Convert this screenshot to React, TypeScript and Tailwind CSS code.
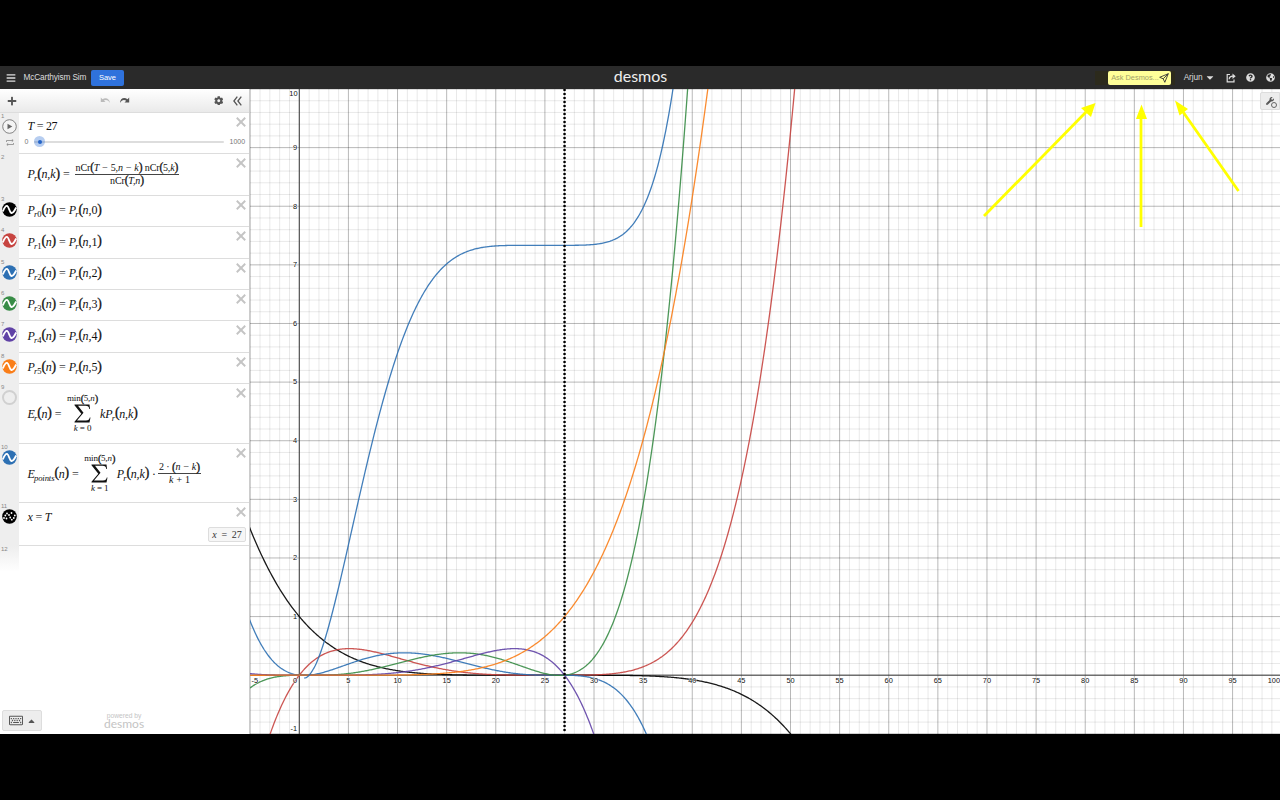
import React from 'react';
import { FaBars, FaCaretDown, FaCaretUp, FaCog, FaGlobeAmericas, FaPlus, FaQuestionCircle, FaRegKeyboard, FaWrench } from 'react-icons/fa';

const COLORS = {
  black: '#000000',
  red: '#c74440',
  blue: '#2d70b3',
  green: '#388c46',
  purple: '#6042a6',
  orange: '#fa7e19',
};

// Plot geometry
const W = 1030;
const H = 645;
const X0 = 49.3;
const Y0 = 586.2;
const SX = 9.824;
const SY = 58.62;

const T = 27;
const BINOM = [1, 5, 10, 10, 5, 1];

const falling = (n: number, k: number) => {
  let r = 1;
  for (let i = 0; i < k; i++) r *= n - i;
  return r;
};

// nCr(T-5,n-k) nCr(5,k) / nCr(T,n), simplified to a polynomial in n
const prob = (n: number, k: number) =>
  (BINOM[k] * falling(n, k) * falling(T - n, 5 - k)) / falling(T, 5);

const expectedPoints = (n: number) => {
  let sum = 0;
  for (let k = 1; k <= Math.min(5, Math.round(n)); k++) {
    sum += (prob(n, k) * 2 * (n - k)) / (k + 1);
  }
  return sum;
};

const plot = (f: (n: number) => number, from = -5.1, to = 60) => {
  let d = '';
  let pen = false;
  for (let n = from; n <= to; n += 0.1) {
    const y = f(n);
    if (y > 12 || y < -3) {
      pen = false;
      continue;
    }
    d += `${pen ? 'L' : 'M'}${(X0 + n * SX).toFixed(2)} ${(Y0 - y * SY).toFixed(2)}`;
    pen = true;
  }
  return d;
};

const range = (a: number, b: number) => Array.from({ length: b - a + 1 }, (_, i) => a + i);

function Graph() {
  const curves = [
    { color: COLORS.black, d: plot((n) => prob(n, 0)) },
    { color: COLORS.red, d: plot((n) => prob(n, 1)) },
    { color: COLORS.blue, d: plot((n) => prob(n, 2)) },
    { color: COLORS.green, d: plot((n) => prob(n, 3)) },
    { color: COLORS.purple, d: plot((n) => prob(n, 4)) },
    { color: COLORS.orange, d: plot((n) => prob(n, 5)) },
    { color: COLORS.blue, d: plot(expectedPoints, 0.5) },
  ];

  return (
    <svg width={W} height={H} viewBox={`0 0 ${W} ${H}`} className="block">
      <rect width={W} height={H} fill="#fff" />
      {range(-5, 100).map((n) => (
        <line key={n} x1={X0 + n * SX} x2={X0 + n * SX} y1={0} y2={H} stroke="#000" strokeOpacity={n % 5 === 0 ? 0.28 : 0.09} />
      ))}
      {range(-5, 50).map((n) => (
        <line key={n} x1={0} x2={W} y1={Y0 - (n * SY) / 5} y2={Y0 - (n * SY) / 5} stroke="#000" strokeOpacity={n % 5 === 0 ? 0.28 : 0.09} />
      ))}
      <line x1={X0} x2={X0} y1={0} y2={H} stroke="#444" />
      <line x1={0} x2={W} y1={Y0} y2={Y0} stroke="#444" />

      {curves.map((c, i) => (
        <path key={i} d={c.d} fill="none" stroke={c.color} strokeWidth={1.3} strokeOpacity={0.9} strokeLinejoin="round" />
      ))}
      <line x1={X0 + T * SX} x2={X0 + T * SX} y1={1} y2={H} stroke="#000" strokeWidth={2.7} strokeLinecap="round" strokeDasharray="0 4" />

      <g fontFamily='"Liberation Sans", Arial, sans-serif' fontSize={7.4} fill="#111" stroke="#fff" strokeWidth={1} strokeOpacity={0.8} paintOrder="stroke">
        {range(1, 19).map((i) => (
          <text key={i} x={X0 + i * 5 * SX} y={594.4} textAnchor="middle">{i * 5}</text>
        ))}
        <text x={1.6} y={594.4}>-5</text>
        <text x={47} y={594.4} textAnchor="end">0</text>
        <text x={1030} y={594.4} textAnchor="end">100</text>
        {range(1, 9).map((i) => (
          <text key={i} x={47} y={Y0 - i * SY + 2.3} textAnchor="end">{i}</text>
        ))}
        <text x={47.5} y={7.3} textAnchor="end">10</text>
        <text x={47} y={642} textAnchor="end">-1</text>
      </g>

      {/* Arrows pointing at the ask box */}
      <g stroke="#ff0" strokeWidth={2.8} fill="#ff0">
        <path d="M734 127L838 21" />
        <path d="M891 138V24" />
        <path d="M988.5 102L931 20" />
        <g stroke="none">
          <path d="M845.5 14L841 28L831 19Z" />
          <path d="M891.5 15.5L897 30H886Z" />
          <path d="M925 11.5L938 20L929.500 26.500Z" />
        </g>
      </g>
    </svg>
  );
}

function Paren({ children }: { children: React.ReactNode }) {
  return (
    <span className="inline-flex items-center whitespace-nowrap">
      <span className="relative -top-[0.500px] mr-[-0.300px] text-[1.15em] not-italic [-webkit-text-stroke:0.300px_#111]">(</span>
      {children}
      <span className="relative -top-[0.500px] text-[1.15em] not-italic [-webkit-text-stroke:0.300px_#111]">)</span>
    </span>
  );
}

function Sub({ children }: { children: React.ReactNode }) {
  return <span className="relative top-[0.480em] -ml-[0.800px] text-[0.720em]">{children}</span>;
}

function Num({ children }: { children: React.ReactNode }) {
  return <span className="not-italic">{children}</span>;
}

function Eq() {
  return <span className="ml-[3px] mr-[3px] not-italic text-[#444]">=</span>;
}

function Frac({ top, bottom }: { top: React.ReactNode; bottom: React.ReactNode }) {
  return (
    <span className="ml-[2px] inline-flex flex-col items-center whitespace-nowrap text-[10px] leading-[12px]">
      <span className="flex items-center border-b border-[#444] px-px">{top}</span>
      <span className="flex items-center">{bottom}</span>
    </span>
  );
}

function Sum({ from }: { from: string }) {
  return (
    <span className="ml-[2px] inline-flex w-[32px] flex-col items-center text-[9px] leading-[9px]">
      <span className="flex items-center"><Num>min</Num><Paren><Num>5</Num>,n</Paren></span>
      <svg width="17" height="19" viewBox="0 0 17 19" className="my-px">
        <path d="M0.500 0.500H15.500L16 5H15.300C15 2.500 14 1.800 11.500 1.800H4L9.500 8.800L3 16.500H12C14.500 16.500 15.300 15.500 15.800 13.500H16.500L15.500 18.500H0.500V17.800L7.300 9.800L0.500 1.200Z" fill="#111" />
      </svg>
      <span>k<Num> = {from}</Num></span>
    </span>
  );
}

function CurveIcon({ color }: { color: string }) {
  return (
    <svg width="15" height="15" viewBox="0 0 15 15">
      <circle cx="7.500" cy="7.500" r="7.300" fill={color} />
      <path d="M0.800 9.500C2.500 5.500 4 3.500 5.200 4C7 4.800 7.500 10.500 9.400 11C10.800 11.300 12.500 9 14.200 5.500" fill="none" stroke="#fff" strokeWidth="1.900" />
    </svg>
  );
}

function DottedIcon() {
  const dots = [[2, 9], [3.3, 6.5], [5, 4.5], [7, 6], [8.2, 8.5], [9.8, 10.7], [11.8, 9], [12.8, 6.5], [9.5, 4], [4.5, 9.5]];
  return (
    <svg width="15" height="15" viewBox="0 0 15 15">
      <circle cx="7.500" cy="7.500" r="7.300" />
      {dots.map(([x, y], i) => <circle key={i} cx={x} cy={y} r="0.900" fill="#fff" />)}
    </svg>
  );
}

function PlayIcon() {
  return (
    <svg width="15" height="15" viewBox="0 0 15 15">
      <circle cx="7.500" cy="7.500" r="6.800" fill="#f4f4f4" stroke="#777" strokeWidth="0.900" />
      <path d="M5.500 4.800L10.300 7.500L5.500 10.200Z" fill="#666" />
    </svg>
  );
}

interface RowProps {
  index: number;
  height: string;
  icon?: React.ReactNode;
  children?: React.ReactNode;
}

function Row({ index, height, icon, children }: RowProps) {
  return (
    <div className={`flex ${height}`}>
      <div className="relative flex w-[19px] shrink-0 flex-col items-center bg-[#eee] pt-[6px]">
        <span className="absolute left-px top-0 font-['Liberation_Sans',sans-serif] text-[6px] not-italic leading-[6px] text-[#888]">{index}</span>
        {icon}
      </div>
      <div className="relative flex flex-1 items-center border-b border-[#ddd] pb-px pl-[8.500px]">
        {children}
        <svg width="10" height="10" viewBox="0 0 9 9" className="absolute right-[3px] top-[3.500px]">
          <path d="M0.700 0.700L8.300 8.300M8.300 0.700L0.700 8.300" stroke="#c4c4c4" strokeWidth="1.700" />
        </svg>
      </div>
    </div>
  );
}

const PROBS = [
  { color: COLORS.black, height: 'h-[31px]' },
  { color: COLORS.red, height: 'h-[32px]' },
  { color: COLORS.blue, height: 'h-[31px]' },
  { color: COLORS.green, height: 'h-[31px]' },
  { color: COLORS.purple, height: 'h-[32px]' },
  { color: COLORS.orange, height: 'h-[31px]' },
];

function Expressions() {
  return (
    <div className="font-['Liberation_Serif',serif] text-[12px] italic leading-[14px] tracking-[-0.100px] text-[#111]">
      <Row
        index={1}
        height="h-[41px]"
        icon={
          <>
            <PlayIcon />
            <svg width="8" height="7" viewBox="0 0 8 7" className="mt-[5px]" fill="none" stroke="#888" strokeWidth="0.800">
              <path d="M0.500 3V1.500H7M5.800 0.300L7.200 1.500L5.800 2.700M7.500 4V5.500H1M2.200 4.300L0.800 5.500L2.200 6.700" />
            </svg>
          </>
        }
      >
        <div className="flex flex-1 flex-col pt-[2px]">
          <span className="tracking-[-0.450px]">T<Eq /><Num>27</Num></span>
          <div className="-ml-[3px] mt-[2px] flex items-center font-['Liberation_Sans',sans-serif] text-[7px] not-italic tracking-normal text-[#777]">
            <span className="w-[9.500px]">0</span>
            <div className="relative h-[2px] w-[189.500px] rounded bg-[#ddd]">
              <span className="absolute left-0 top-[-4.500px] flex h-[11px] w-[11px] items-center justify-center rounded-full bg-[#2d70d3]/35">
                <span className="h-[4px] w-[4px] rounded-full bg-[#2464c8]" />
              </span>
            </div>
            <span className="ml-[6px]">1000</span>
          </div>
        </div>
      </Row>
      <Row index={2} height="h-[42px]">
        <span className="inline-flex items-center">
          P<Sub>r</Sub><Paren>n,k</Paren><Eq />
          <Frac
            top={<><Num>nCr</Num><Paren>T&nbsp;−&nbsp;<Num>5</Num>,n&nbsp;−&nbsp;k</Paren>&nbsp;<Num>nCr</Num><Paren><Num>5</Num>,k</Paren></>}
            bottom={<><Num>nCr</Num><Paren>T,n</Paren></>}
          />
        </span>
      </Row>
      {PROBS.map((p, i) => (
        <Row key={i} index={i + 3} height={p.height} icon={<CurveIcon color={p.color} />}>
          <span className="inline-flex items-center pb-px">
            P<Sub>r<Num>{i}</Num></Sub><Paren>n</Paren><Eq />P<Sub>r</Sub><Paren>n,<Num>{i}</Num></Paren>
          </span>
        </Row>
      ))}
      <Row index={9} height="h-[60px]" icon={<span className="h-[15px] w-[15px] rounded-full border-2 border-[#d0d0d0]" />}>
        <span className="inline-flex items-center pt-px">
          E<Sub>r</Sub><Paren>n</Paren><Eq /><Sum from="0" /><span className="ml-[1.500px]">kP</span><Sub>r</Sub><Paren>n,k</Paren>
        </span>
      </Row>
      <Row index={10} height="h-[59px]" icon={<CurveIcon color={COLORS.blue} />}>
        <span className="inline-flex items-center pt-[2px]">
          E<Sub>points</Sub><Paren>n</Paren><Eq /><Sum from="1" /><span className="ml-px">P</span><Sub>r</Sub><Paren>n,k</Paren>
          <span className="ml-[3px] mr-px">·</span>
          <Frac top={<><Num>2&nbsp;·&nbsp;</Num><Paren>n&nbsp;−&nbsp;k</Paren></>} bottom={<>k&nbsp;+&nbsp;<Num>1</Num></>} />
        </span>
      </Row>
      <Row index={11} height="h-[43px]" icon={<DottedIcon />}>
        <span className="mb-[14px] tracking-[-0.400px]">x<Eq />T</span>
        <span className="absolute bottom-[3px] right-[3px] h-[15px] w-[38px] whitespace-nowrap rounded-[2px] border border-[#ddd] bg-[#f6f6f6] text-center text-[10px] leading-[13px] text-[#333]">
          x<Num>&nbsp; = &nbsp;27</Num>
        </span>
      </Row>
      <div className="h-[26px] w-[19px] bg-linear-to-b from-[#eee] to-white pl-px font-['Liberation_Sans',sans-serif] text-[6px] not-italic leading-[6px] text-[#888]">
        12
      </div>
    </div>
  );
}

function TopBar() {
  return (
    <header className="flex h-[23px] items-center bg-[#2a2a2a] text-[#ddd]">
      <div className="flex flex-1 items-center">
        <FaBars className="ml-[6px] h-[10px] w-[10px]" />
        <span className="ml-[7.500px] w-[67.500px] whitespace-nowrap text-[8.300px] tracking-[-0.150px]">McCarthyism Sim</span>
        <button className="h-[16px] w-[33px] rounded-[2px] bg-[#2f72dc] text-[7.500px] text-white">Save</button>
      </div>
      <div className="pb-[3px] pl-px font-['Lato'] text-[16px] leading-[18px] text-[#eee]">desmos</div>
      <div className="flex flex-1 items-center justify-end">
        <div className="flex bg-[#2c2a1c] pl-[13px] pr-[4px]">
          <div className="flex h-[14px] w-[63px] items-center justify-between whitespace-nowrap rounded-[2px] bg-[#ffff99] pl-[3px] pr-[3px] text-[7.400px] text-[#a3a36a]">
            Ask Desmos...
            <svg width="10" height="10" viewBox="0 0 10 10" className="shrink-0" fill="none" stroke="#333" strokeWidth="0.900" strokeLinejoin="round">
              <path d="M9.300 0.700L0.700 4.300L4.200 5.800L5.800 9.300ZM9.300 0.700L4.200 5.800" />
            </svg>
          </div>
        </div>
        <span className="ml-[8.500px] text-[8.300px] tracking-[-0.100px]">Arjun</span>
        <FaCaretDown className="ml-[3px] h-[11px] w-[8px]" />
        <svg width="10" height="10" viewBox="0 0 10 10" className="ml-[12px]" fill="none" stroke="#ddd" strokeWidth="1.200">
          <path d="M4 1.500H1.200V8.800H8V6.500" />
          <path d="M3.200 6.300C3.200 4 4.500 3.200 7 3.200" />
          <path d="M6.500 0.500L9.700 3.200L6.500 5.900Z" fill="#ddd" stroke="none" />
        </svg>
        <FaQuestionCircle className="ml-[10.500px] h-[9px] w-[9px]" />
        <FaGlobeAmericas className="ml-[11px] mr-[5px] h-[9px] w-[9px]" />
      </div>
    </header>
  );
}

function Toolbar() {
  return (
    <div className="flex h-[24px] items-center border-b border-[#ddd] bg-linear-to-b from-white to-[#eaeaea] text-[#555]">
      <FaPlus className="ml-[7px] h-[10px] w-[10px]" />
      <svg width="11" height="8" viewBox="0 0 10 8" className="ml-[83px] text-[#bbb]">
        <path d="M0.300 0.500V5H5L3.300 3.500C5.500 2.300 8 3 9.500 6C9 2 5.500 0 2 2.200Z" fill="currentColor" />
      </svg>
      <svg width="11" height="8" viewBox="0 0 10 8" className="ml-[8px]">
        <path d="M9.700 0.500V5.500H5L6.700 3.700C4.500 2.300 2 3 0.500 6C0.500 1.500 4.500 -0.500 8 2.200Z" fill="currentColor" />
      </svg>
      <FaCog className="ml-[83.500px] h-[9.500px] w-[9.500px]" />
      <svg width="9" height="10" viewBox="0 0 9 10" className="ml-[10px]" fill="none" stroke="currentColor" strokeWidth="1.300">
        <path d="M4.300 0.700L0.900 5L4.300 9.300M8.300 0.700L4.900 5L8.300 9.300" />
      </svg>
    </div>
  );
}

function App() {
  return (
    <div className="flex h-[800px] w-[1280px] flex-col overflow-hidden bg-black pt-[66px] font-['Liberation_Sans',Arial,sans-serif]">
      <TopBar />
      <main className="flex h-[645px]">
        <aside className="flex w-[250px] shrink-0 flex-col border-r border-[#ccc] bg-white">
          <Toolbar />
          <Expressions />
          <div className="mt-auto flex items-end pb-[3px]">
            <button className="ml-[2px] flex h-[21px] w-[40px] items-center justify-center gap-[5px] rounded-[2px] border border-[#ddd] bg-[#ededed] text-[#555]">
              <FaRegKeyboard className="h-[13px] w-[14px]" />
              <FaCaretUp className="h-[10px] w-[7px]" />
            </button>
            <div className="mb-[3px] ml-[62px] flex flex-col items-center text-[#c4c4c4]">
              <span className="text-[6.700px] leading-[7px]">powered by</span>
              <span className="font-['Lato'] text-[12px] leading-[9px]">desmos</span>
            </div>
          </div>
        </aside>
        <section className="relative">
          <Graph />
          <button className="absolute right-0 top-[3px] flex h-[18px] w-[20px] items-center justify-center rounded-l-[2px] border border-[#ddd] bg-[#ededed]">
            <FaWrench className="h-[8px] w-[8px] text-[#555]" />
            <span className="absolute bottom-px right-[2px] h-[6px] w-[6px] rounded-full border border-[#666] bg-[#ededed]" />
          </button>
        </section>
      </main>
    </div>
  );
}

export default App;
